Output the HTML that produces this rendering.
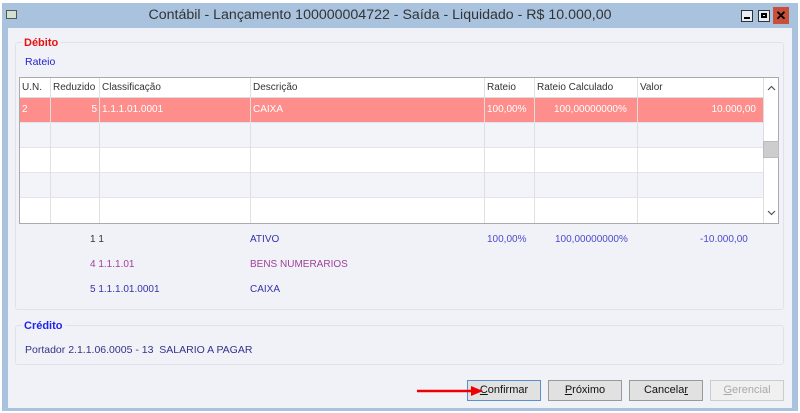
<!DOCTYPE html>
<html><head><style>
*{box-sizing:border-box;margin:0;padding:0}
body{width:800px;height:413px;background:#fff;font-family:"Liberation Sans",sans-serif;font-size:10px;position:relative;overflow:hidden}
.a{position:absolute}
.win{left:2px;top:3px;width:796px;height:408px;background:#a9c3df}
.body{left:8px;top:28px;width:784px;height:380px;background:#f1f2f8}
.title{left:-40px;top:3px;width:840px;height:25px;text-align:center;font-size:14.2px;color:#333;line-height:25px}
.grp{border:1px solid #e0e2ea;border-radius:3px}
.cell{position:absolute;height:25px;line-height:25px;padding:0 2px;white-space:nowrap}
.btn{position:absolute;top:380px;width:74px;height:21px;border:1px solid #9a9a9a;background:#e1e1e1;text-align:center;line-height:19px;font-size:11px;color:#111}
</style></head><body>
<div class="a win"></div>
<div class="a title">Contábil - Lançamento 100000004722 - Saída - Liquidado - R$ 10.000,00</div>
<div class="a" style="left:6px;top:10px;width:11px;height:9px;border:1px solid #555;background:#cfe2cf"></div>
<div class="a" style="left:741px;top:10px;width:12px;height:12px;border:1px solid #333;background:#e8eef6"><div class="a" style="left:2px;top:6px;width:6px;height:2px;background:#000"></div></div>
<div class="a" style="left:758px;top:10px;width:12px;height:12px;border:1px solid #333;background:#e8eef6"><div class="a" style="left:2px;top:2px;width:6px;height:5px;border:2px solid #000"></div></div>
<div class="a" style="left:773px;top:7px;width:16px;height:17px;background:#c8503a;color:#000;font-weight:bold;font-size:13px;text-align:center;line-height:17px">✕</div>
<div class="a body"></div>
<div class="a grp" style="left:15px;top:42px;width:769px;height:268px"></div>
<div class="a" style="left:22px;top:37px;color:#e81010;font-weight:bold;font-size:11px;background:#f1f2f8;padding:0 2px">Débito</div>
<div class="a" style="left:25px;top:56px;color:#2222cc;font-size:10.5px">Rateio</div>
<div class="a" style="left:19px;top:77px;width:760px;height:147px;border:1px solid #aaa;background:#fff">
 <div class="a" style="left:0;top:45px;width:743px;height:25px;background:#f3f4f9"></div>
 <div class="a" style="left:0;top:95px;width:743px;height:25px;background:#f3f4f9"></div>
 <div class="a" style="left:0;top:19px;width:743px;height:25px;background:#fe8e8c"></div>
 <div class="a" style="left:0;top:44px;width:743px;border-top:1px solid #e4e4ea"></div>
 <div class="a" style="left:0;top:69px;width:743px;border-top:1px solid #e4e4ea"></div>
 <div class="a" style="left:0;top:94px;width:743px;border-top:1px solid #e4e4ea"></div>
 <div class="a" style="left:0;top:119px;width:743px;border-top:1px solid #e4e4ea"></div>
 <div class="a" style="left:30px;top:0;height:145px;border-left:1px solid #e0e0e0"></div>
 <div class="a" style="left:79px;top:0;height:145px;border-left:1px solid #e0e0e0"></div>
 <div class="a" style="left:230px;top:0;height:145px;border-left:1px solid #e0e0e0"></div>
 <div class="a" style="left:464px;top:0;height:145px;border-left:1px solid #e0e0e0"></div>
 <div class="a" style="left:514px;top:0;height:145px;border-left:1px solid #e0e0e0"></div>
 <div class="a" style="left:617px;top:0;height:145px;border-left:1px solid #e0e0e0"></div>
 <div class="a" style="left:0;top:19px;width:743px;border-top:1px solid #ddd"></div>
 <div class="cell" style="left:0;top:-3px;color:#333">U.N.</div>
 <div class="cell" style="left:31px;top:-3px;color:#333">Reduzido</div>
 <div class="cell" style="left:80px;top:-3px;color:#333">Classificação</div>
 <div class="cell" style="left:231px;top:-3px;color:#333">Descrição</div>
 <div class="cell" style="left:465px;top:-3px;color:#333">Rateio</div>
 <div class="cell" style="left:515px;top:-3px;color:#333">Rateio Calculado</div>
 <div class="cell" style="left:618px;top:-3px;color:#333">Valor</div>
 <div class="cell" style="left:0;top:19px;color:#fff">2</div>
 <div class="cell" style="left:31px;top:19px;width:48px;text-align:right;color:#fff">5</div>
 <div class="cell" style="left:80px;top:19px;color:#fff">1.1.1.01.0001</div>
 <div class="cell" style="left:231px;top:19px;color:#fff">CAIXA</div>
 <div class="cell" style="left:465px;top:19px;color:#fff">100,00%</div>
 <div class="cell" style="left:532px;top:19px;color:#fff">100,00000000%</div>
 <div class="cell" style="left:618px;top:19px;width:120px;text-align:right;color:#fff">10.000,00</div>
 <div class="a" style="left:743px;top:0;width:15px;height:145px;background:#fff;border-left:1px solid #ddd">
  <svg class="a" style="left:3px;top:7px" width="9" height="6"><polyline points="1,5 4.5,1.5 8,5" fill="none" stroke="#555" stroke-width="1.2"/></svg>
  <div class="a" style="left:-1px;top:63px;width:16px;height:17px;background:#cdcdcd;border:1px solid #bbb"></div>
  <svg class="a" style="left:3px;top:132px" width="9" height="6"><polyline points="1,1 4.5,4.5 8,1" fill="none" stroke="#555" stroke-width="1.2"/></svg>
 </div>
</div>
<div class="a" style="left:90px;top:234px;color:#333">1 1</div>
<div class="a" style="left:250px;top:234px;color:#3333aa">ATIVO</div>
<div class="a" style="left:487px;top:234px;color:#4b4bcc">100,00%</div>
<div class="a" style="left:555px;top:234px;color:#4b4bcc">100,00000000%</div>
<div class="a" style="left:700px;top:234px;color:#4b4bcc">-10.000,00</div>
<div class="a" style="left:90px;top:259px;color:#a0409a">4 1.1.1.01</div>
<div class="a" style="left:250px;top:259px;color:#a0409a">BENS NUMERARIOS</div>
<div class="a" style="left:90px;top:284px;color:#3333aa">5 1.1.1.01.0001</div>
<div class="a" style="left:250px;top:284px;color:#3333aa">CAIXA</div>
<div class="a grp" style="left:15px;top:325px;width:769px;height:40px"></div>
<div class="a" style="left:22px;top:320px;color:#2222ee;font-weight:bold;font-size:11px;background:#f1f2f8;padding:0 2px">Crédito</div>
<div class="a" style="left:25px;top:344px;color:#333388;font-size:10.5px">Portador 2.1.1.06.0005 - 13&nbsp; SALARIO A PAGAR</div>
<div class="btn" style="left:467px;border-color:#5b8fc8"><u>C</u>onfirmar</div>
<div class="btn" style="left:548px"><u>P</u>róximo</div>
<div class="btn" style="left:629px">Cancela<u>r</u></div>
<div class="btn" style="left:710px;background:#f0f0f0;border-color:#ccc;color:#aaa"><u>G</u>erencial</div>
<svg class="a" style="left:415px;top:385px" width="70" height="12"><line x1="2" y1="6" x2="58" y2="6" stroke="#e00" stroke-width="2.5"/><polygon points="56,1 68,6 56,11" fill="#e00"/></svg>
</body></html>
